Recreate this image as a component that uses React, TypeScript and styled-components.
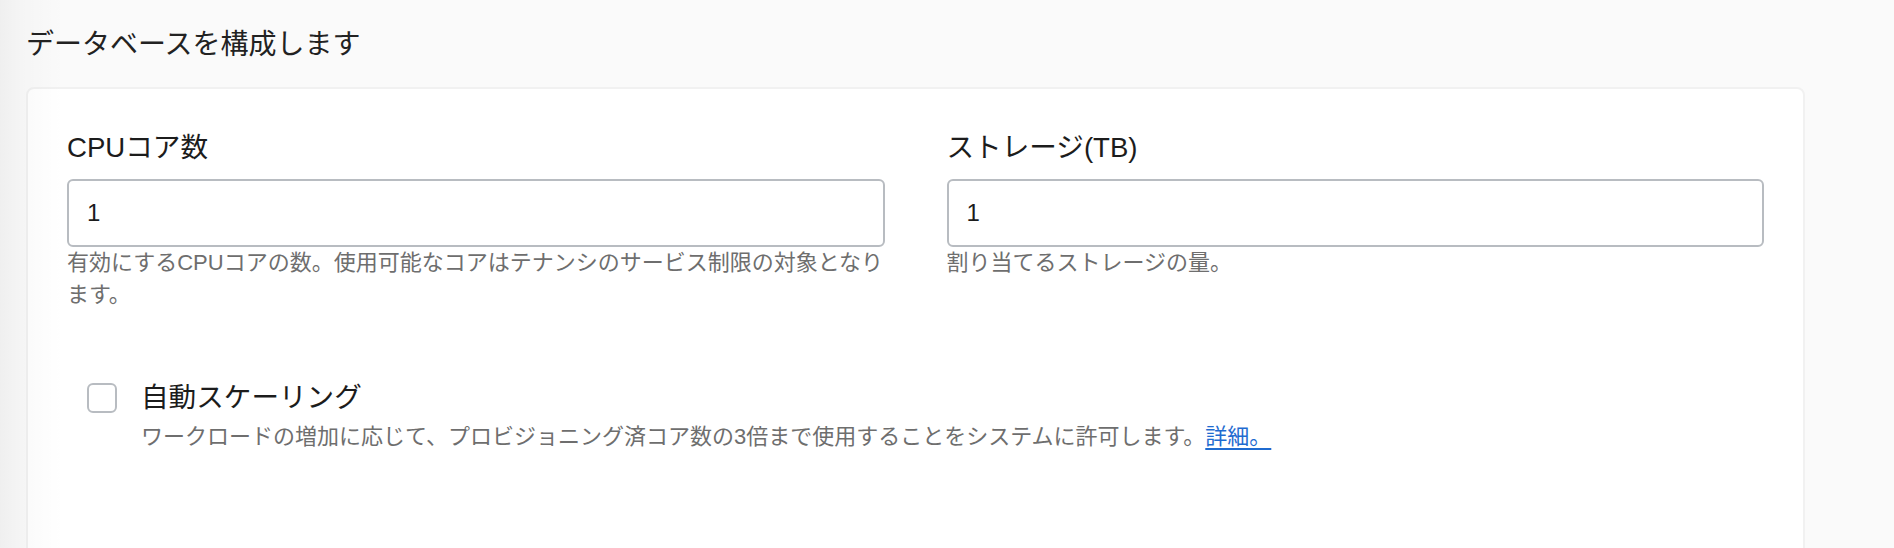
import styled, { createGlobalStyle } from "styled-components";

// ============================================
// Global
// ============================================
const GlobalStyle = createGlobalStyle`
  html, body {
    margin: 0;
    padding: 0;
    background: #fafafa;
  }

  body {
    font-family: "Liberation Sans", "Noto Sans CJK JP", sans-serif;
    color: #1f1f1f;
  }
`;

// ============================================
// Styled Components
// ============================================

const Page = styled.div`
  position: relative;
  min-height: 548px;
  padding: 27px 89px 0 26px;
  box-sizing: border-box;
  overflow: hidden;

  /* サイドバーの影 */
  &::after {
    content: "";
    position: absolute;
    top: 0;
    left: 0;
    bottom: 0;
    width: 64px;
    pointer-events: none;
    background: linear-gradient(
      to right,
      rgba(0, 0, 0, 0.045) 0,
      rgba(0, 0, 0, 0.02) 22px,
      rgba(0, 0, 0, 0) 64px
    );
  }
`;

const Title = styled.h2`
  margin: 0 0 24px 0;
  font-size: 28px;
  line-height: 36px;
  font-weight: 400;
  color: #222;
`;

const Card = styled.section`
  background: #fff;
  border: 2px solid #f1f1f1;
  border-radius: 8px;
  padding: 43px 39px 140px;
`;

const FieldGrid = styled.div`
  display: grid;
  grid-template-columns: 1fr 1fr;
  column-gap: 62px;
`;

const Field = styled.div`
  display: flex;
  flex-direction: column;
  min-width: 0;
`;

const Label = styled.label`
  font-size: 27.6px;
  line-height: 32px;
  color: #1c1c1c;
  margin-bottom: 15px;
`;

const TextInput = styled.input`
  height: 68px;
  box-sizing: border-box;
  border: 2px solid #b8bcc1;
  border-radius: 6px;
  padding: 0 18px;
  font-family: "Liberation Sans", "Noto Sans CJK JP", sans-serif;
  font-size: 24px;
  color: #1c1c1c;
  background: #fff;
  outline: none;
`;

const Help = styled.div`
  font-size: 22px;
  line-height: 32px;
  color: #6e6e6e;
`;

const CheckRow = styled.div`
  display: flex;
  align-items: flex-start;
  gap: 24px;
  margin-top: 64px;
  padding-left: 20px;
`;

const CheckBox = styled.span<{ $checked?: boolean }>`
  flex: none;
  width: 30px;
  height: 30px;
  box-sizing: border-box;
  margin-top: 8px;
  border: 2px solid #b8bcc1;
  border-radius: 6px;
  background: ${(p) => (p.$checked ? "#1f6bd0" : "#fff")};
`;

const CheckText = styled.div`
  display: flex;
  flex-direction: column;
`;

const CheckLabel = styled.div`
  font-size: 27.6px;
  line-height: 46px;
  color: #1c1c1c;
`;

const Link = styled.a`
  color: #1f6bd0;
  text-decoration: underline;
  text-decoration-thickness: 2px;
  text-underline-offset: 4px;
  cursor: pointer;
`;

// ============================================
// Main Component
// ============================================

export default function App() {
  return (
    <>
      <GlobalStyle />
      <Page>
        <Title>データベースを構成します</Title>

        <Card>
          <FieldGrid>
            <Field>
              <Label>CPUコア数</Label>
              <TextInput defaultValue="1" />
              <Help>
                有効にするCPUコアの数。使用可能なコアはテナンシのサービス制限の対象となります。
              </Help>
            </Field>
            <Field>
              <Label>ストレージ(TB)</Label>
              <TextInput defaultValue="1" />
              <Help>割り当てるストレージの量。</Help>
            </Field>
          </FieldGrid>

          {/* 自動スケーリング */}
          <CheckRow>
            <CheckBox />
            <CheckText>
              <CheckLabel>自動スケーリング</CheckLabel>
              <Help>
                ワークロードの増加に応じて、プロビジョニング済コア数の3倍まで使用することをシステムに許可します。
                <Link>詳細。 </Link>
              </Help>
            </CheckText>
          </CheckRow>
        </Card>
      </Page>
    </>
  );
}
